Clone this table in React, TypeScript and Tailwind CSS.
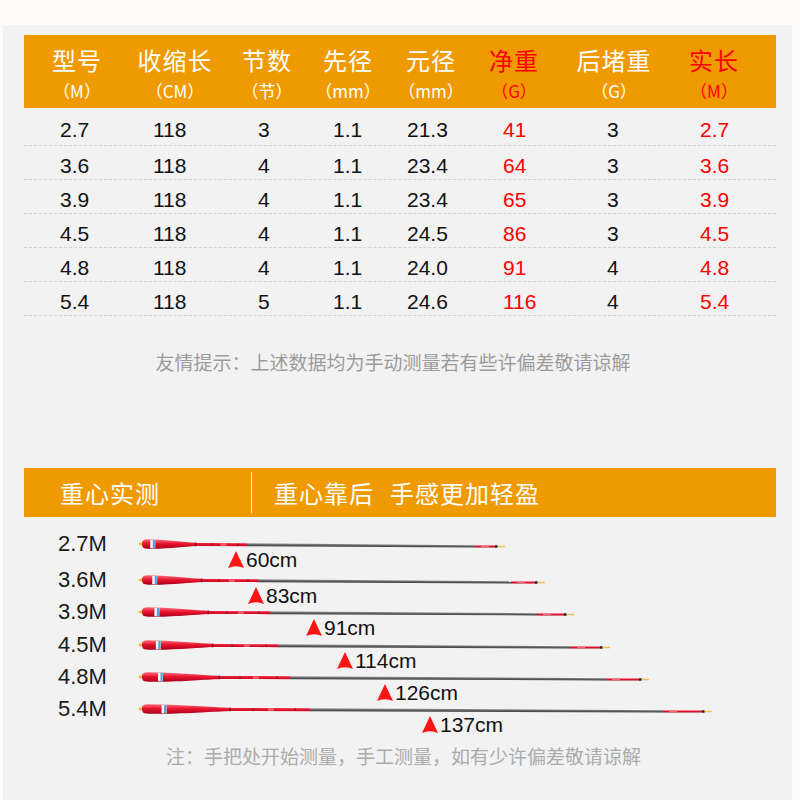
import React from "react";

const cjk = "font-['Noto_Sans_CJK_SC',sans-serif]";
const latin = "font-['Liberation_Sans',Arial,sans-serif]";

interface Col {
  title: string;
  unit: string;
  red?: boolean;
}

const cols: Col[] = [
  { title: "型号", unit: "（M）" },
  { title: "收缩长", unit: "（CM）" },
  { title: "节数", unit: "（节）" },
  { title: "先径", unit: "（mm）" },
  { title: "元径", unit: "（mm）" },
  { title: "净重", unit: "（G）", red: true },
  { title: "后堵重", unit: "（G）" },
  { title: "实长", unit: "（M）", red: true },
];

const rows = [
  ["2.7", "118", "3", "1.1", "21.3", "41", "3", "2.7"],
  ["3.6", "118", "4", "1.1", "23.4", "64", "3", "3.6"],
  ["3.9", "118", "4", "1.1", "23.4", "65", "3", "3.9"],
  ["4.5", "118", "4", "1.1", "24.5", "86", "3", "4.5"],
  ["4.8", "118", "4", "1.1", "24.0", "91", "4", "4.8"],
  ["5.4", "118", "5", "1.1", "24.6", "116", "4", "5.4"],
];

interface RodData {
  label: string;
  end: number; // x of rod tip
  hand: number; // x where the red handle ends
  tip: number; // x where red tip section starts
  marker: number; // x of the balance marker
  cm: string;
  gap: string;
}

const rods: RodData[] = [
  { label: "2.7M", end: 505, hand: 247, tip: 475, marker: 228, cm: "60cm", gap: "mt-[17px]" },
  { label: "3.6M", end: 545, hand: 258, tip: 511, marker: 248, cm: "83cm", gap: "mt-[6px]" },
  { label: "3.9M", end: 574, hand: 270, tip: 537, marker: 306, cm: "91cm", gap: "mt-[2px]" },
  { label: "4.5M", end: 610, hand: 278, tip: 571, marker: 337, cm: "114cm", gap: "mt-[3px]" },
  { label: "4.8M", end: 649, hand: 290, tip: 606, marker: 377, cm: "126cm", gap: "mt-[2px]" },
  { label: "5.4M", end: 712, hand: 310, tip: 663, marker: 422, cm: "137cm", gap: "mt-[2px]" },
];

const Rod: React.FC<{ r: RodData; i: number }> = ({ r, i }) => {
  const x0 = 138;
  const w = r.end - x0 + 4;
  const bulb = 140 + (r.hand - 140) * 0.18;
  const taper = 140 + (r.hand - 140) * 0.55;
  const black = r.end - 10;
  const angle = (Math.atan2(2.5, r.end - 140) * 180) / Math.PI;
  const span = r.hand - taper;

  return (
    <svg width={w} height={20} viewBox={`${x0} 0 ${w} 20`} className="block overflow-visible">
      <defs>
        <linearGradient id={`red${i}`} x1="0" y1="0" x2="0" y2="1">
          <stop offset="0" stopColor="#ff6b7a" />
          <stop offset="0.45" stopColor="#e8142f" />
          <stop offset="1" stopColor="#a8001a" />
        </linearGradient>
        <linearGradient id={`gray${i}`} x1="0" y1="0" x2="0" y2="1">
          <stop offset="0" stopColor="#9a9a9a" />
          <stop offset="0.5" stopColor="#5e5e5e" />
          <stop offset="1" stopColor="#3c3c3c" />
        </linearGradient>
      </defs>
      <g transform={`rotate(${angle} 140 10)`}>
        <ellipse cx={140.5} cy={10} rx={2} ry={1.4} fill="#f6b53a" />
        <path
          d={`M142 10 C142 6.2 144 5.4 148 5.3 L${bulb} 5.5 C${bulb + (taper - bulb) * 0.45} 6.6 ${taper - 8} 8.3 ${taper} 8.5 L${r.hand} 8.6 L${r.hand} 11.4 L${taper} 11.5 C${taper - 8} 11.7 ${bulb + (taper - bulb) * 0.45} 13.4 ${bulb} 14.5 L148 14.7 C144 14.6 142 13.8 142 10 Z`}
          fill={`url(#red${i})`}
        />
        <rect x={bulb - 9} y={5.8} width={5} height={8.4} fill="#f4f4f4" />
        <rect x={bulb - 6.5} y={5.8} width={2.2} height={8.4} fill="#4ea6e0" />
        <rect x={taper - 4} y={8} width={1.4} height={4} fill="#3a1a1a" opacity={0.6} />
        <rect x={taper + span * 0.25} y={8.6} width={1.2} height={2.8} fill="#3a1a1a" opacity={0.5} />
        <rect x={taper + span * 0.45} y={8.6} width={6} height={2.8} fill="#ff9aa6" opacity={0.5} />
        <rect x={taper + span * 0.8} y={8.6} width={1.2} height={2.8} fill="#3a1a1a" opacity={0.6} />
        <polygon
          points={`${r.hand},8.5 ${r.tip},8.9 ${r.tip},11.1 ${r.hand},11.5`}
          fill={`url(#gray${i})`}
        />
        <rect x={r.tip} y={8.9} width={black - r.tip} height={2.2} fill={`url(#red${i})`} />
        <rect x={r.tip + 6} y={9.6} width={8} height={0.8} fill="#ffc2c9" opacity={0.7} />
        <rect x={black} y={8.8} width={2.6} height={2.4} fill="#1e1e1e" />
        <rect x={black + 2.8} y={9.2} width={r.end - black - 2.8} height={1.6} fill="#f7c04a" />
      </g>
    </svg>
  );
};

const Marker: React.FC<{ r: RodData }> = ({ r }) => (
  <div className="h-[10px] flex items-center" style={{ paddingLeft: r.marker - 3 }}>
    <svg width={16} height={17} viewBox="0 0 16 17" className="shrink-0">
      <path d="M8 0 L16 17 Q8 13.5 0 17 Z" fill="#ff1414" />
    </svg>
    <span className={`${latin} ml-[2px] text-[21px] leading-none text-[#111]`}>{r.cm}</span>
  </div>
);

export default function App() {
  return (
    <div className="w-[800px] h-[800px] overflow-hidden bg-[#fefbfb]">
      <div className="ml-[3px] mt-[25px] w-[789px] h-[775px] bg-[#f2f2f2] pt-[10px]">
        {/* spec table */}
        <div className="ml-[21px] w-[752px]">
          <div
            className={`${cjk} h-[73px] bg-[#f09a02] grid grid-cols-[106px_90px_94px_68px_98px_68px_132px_68px_28px]`}
          >
            {cols.map((c) => (
              <div
                key={c.title}
                className={`flex flex-col items-center pt-[11px] ${c.red ? "text-[#ff0000]" : "text-white"}`}
              >
                <span className="text-[24px] leading-[28px] tracking-[1px]">{c.title}</span>
                <span className="mt-[7px] text-[17px] leading-[20px]">{c.unit}</span>
              </div>
            ))}
          </div>
          {rows.map((row, ri) => (
            <div
              key={ri}
              className={`${latin} ${ri === 0 ? "h-[38px] pt-[6px]" : "h-[34px] pt-[5px]"} border-b border-dashed border-[#d2d2d2] pl-[36px] grid grid-cols-[93px_105px_75px_74px_96px_104px_93px_76px] items-center text-[21px] leading-none`}
            >
              {row.map((v, ci) => (
                <span key={ci} className={ci === 5 || ci === 7 ? "text-[#ff0000]" : "text-[#111]"}>
                  {v}
                </span>
              ))}
            </div>
          ))}
        </div>

        <p className={`${cjk} mt-[33px] text-center text-[19px] leading-[26px] text-[#9b9b9b] pr-[9px]`}>
          友情提示：上述数据均为手动测量若有些许偏差敬请谅解
        </p>

        {/* balance point section */}
        <div className={`${cjk} ml-[21px] mt-[93px] w-[752px] h-[49px] bg-[#f09a02] flex items-center text-white text-[24px]`}>
          <div className="w-[227px] pl-[36px] tracking-[1px]">重心实测</div>
          <div className="w-px h-[41px] bg-white/90" />
          <div className="pl-[22px] tracking-[1px]">
            重心靠后<span className="ml-[16px]">手感更加轻盈</span>
          </div>
        </div>

        <div>
          {rods.map((r, i) => (
            <div key={r.label} className={`flex flex-col ${r.gap}`}>
              <div className="h-[20px] flex items-center">
                <div className={`${latin} w-[135px] pl-[55px] text-[22px] leading-none text-[#1a1a1a]`}>
                  {r.label}
                </div>
                <Rod r={r} i={i} />
              </div>
              <Marker r={r} />
            </div>
          ))}
        </div>

        <p className={`${cjk} mt-[15px] pl-[12px] text-center text-[19px] leading-[24px] text-[#ababab]`}>
          注：手把处开始测量，手工测量，如有少许偏差敬请谅解
        </p>
      </div>
    </div>
  );
}
